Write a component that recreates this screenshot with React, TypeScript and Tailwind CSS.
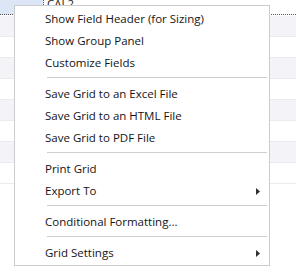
import React from "react";

type Item = { label: string; sub?: boolean } | { sep: true };

const items: Item[] = [
  { label: "Show Field Header (for Sizing)" },
  { label: "Show Group Panel" },
  { label: "Customize Fields" },
  { sep: true },
  { label: "Save Grid to an Excel File" },
  { label: "Save Grid to an HTML File" },
  { label: "Save Grid to PDF File" },
  { sep: true },
  { label: "Print Grid" },
  { label: "Export To", sub: true },
  { sep: true },
  { label: "Conditional Formatting..." },
  { sep: true },
  { label: "Grid Settings", sub: true },
];

export default function App() {
  const rows = [0, 1, 2, 3, 4, 5, 6, 7];
  return (
    <div
      className="relative w-[296px] h-[274px] overflow-hidden bg-white"
      style={{ fontFamily: '"Open Sans", "Noto Sans", sans-serif' }}
    >
      {/* background grid */}
      <div className="flex flex-col">
        <div className="h-[16px] flex">
          <div className="w-[43px] h-[15px] bg-[#dde6f7] border-b border-dotted border-[#555]" />
          <div className="w-px h-[15px] border-l border-dotted border-[#555]" />
          <div className="flex-1 h-[15px] border-b border-dotted border-[#555] pl-[3px] text-[11.5px] leading-[8px] text-[#222]">
            CAL2
          </div>
        </div>
        {rows.map((r) => (
          <div
            key={r}
            className={
              r % 2 === 0
                ? "h-[21px] bg-[#f4f4f8] border-b border-[#eaeaef]"
                : "h-[21px] bg-white border-b border-[#eaeaef]"
            }
          />
        ))}
      </div>

      {/* context menu */}
      <div className="absolute left-[14px] top-[5px] w-[256px] bg-white border border-[#cccccc] pt-[2px] pb-[1px] text-[11.5px] text-[#141414]">
        {items.map((it, i) =>
          "sep" in it ? (
            <div key={i} className="h-[9px] pt-[3px] pl-[32px] pr-[2px]">
              <div className="h-px bg-[#cfcfcf]" />
            </div>
          ) : (
            <div key={i} className="h-[22px] flex items-center pl-[30px] pr-[9px] leading-[22px]">
              <span className="flex-1 whitespace-nowrap">{it.label}</span>
              {it.sub && (
                <svg width="4" height="7" viewBox="0 0 4 7">
                  <path d="M0 0 L4 3.5 L0 7 Z" fill="#303030" />
                </svg>
              )}
            </div>
          )
        )}
      </div>
    </div>
  );
}
